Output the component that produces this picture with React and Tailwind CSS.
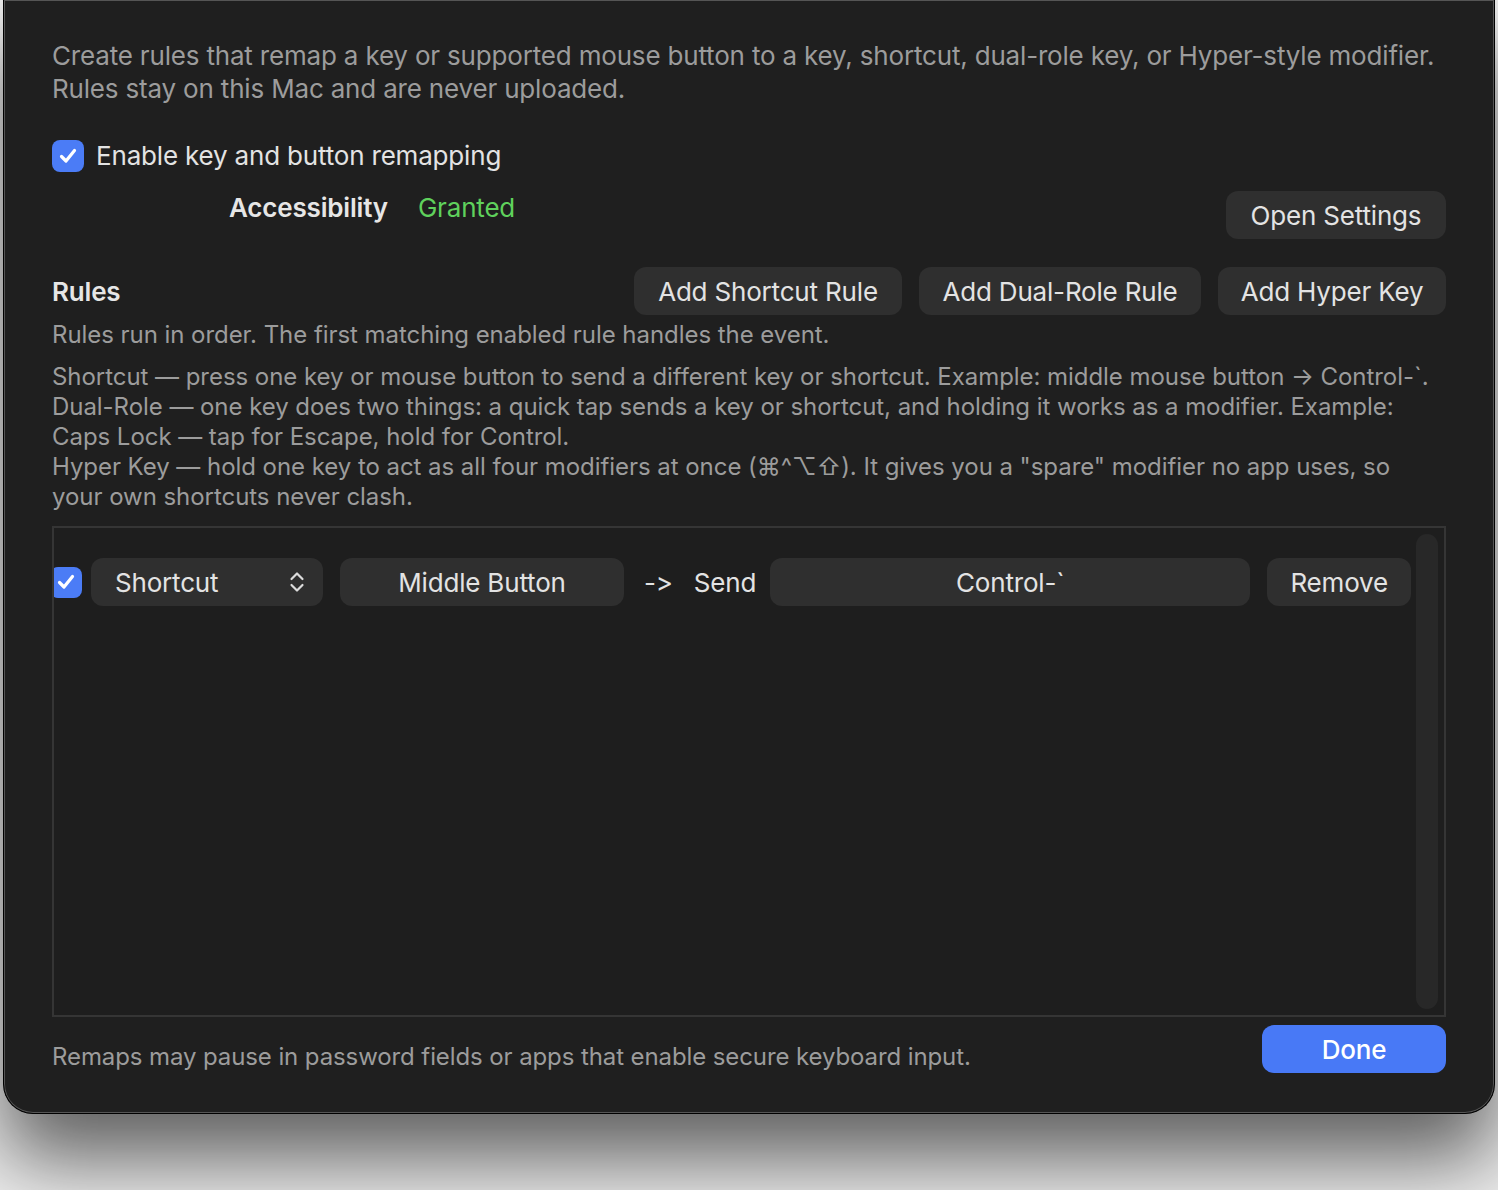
import React, { useState } from "react";

function Check({ checked, onChange, className = "" }) {
  return (
    <button
      onClick={onChange}
      className={`flex items-center justify-center rounded-[8px] ${checked ? "bg-[#4b7cf6]" : "bg-[#3a3a3a]"} ${className}`}
    >
      {checked && (
        <svg width="22" height="22" viewBox="0 0 22 22" fill="none">
          <path d="M4.5 11.5 L9 16 L17.5 5.5" stroke="white" strokeWidth="3.2" strokeLinecap="round" strokeLinejoin="round" />
        </svg>
      )}
    </button>
  );
}

function Btn({ children, className = "" }) {
  return (
    <button className={`h-[48px] rounded-[12px] bg-[#2f2f2f] text-[26px] tracking-[-0.18px] text-[#e3e3e3] ${className}`}>
      {children}
    </button>
  );
}

export default function App() {
  const [enabled, setEnabled] = useState(true);
  const [ruleOn, setRuleOn] = useState(true);

  return (
    <div
      className="h-[1190px] w-full overflow-hidden bg-[#ededed]"
      style={{ fontFamily: "Inter, 'Noto Sans', sans-serif" }}
    >
      <div className="ml-[3px] flex h-[1114px] w-[1492px] flex-col rounded-b-[30px] border-x border-b border-[#000] bg-[#1f1f1f] px-[48px] shadow-[0_45px_80px_rgba(0,0,0,0.6),inset_0_0_0_1px_#555]">
        <p className="mt-[39px] text-[26px] leading-[33px] tracking-[-0.18px] text-[#9c9c9c]">
          Create rules that remap a key or supported mouse button to a key, shortcut, dual-role key, or Hyper-style modifier.
          <br />
          Rules stay on this Mac and are never uploaded.
        </p>

        <div className="mt-[31px] flex items-center gap-[12px]">
          <Check checked={enabled} onChange={() => setEnabled(!enabled)} className="h-[32px] w-[32px]" />
          <span className="text-[26px] tracking-[-0.18px] text-[#e3e3e3]">Enable key and button remapping</span>
        </div>

        <div className="mt-[10px] flex items-start">
          <div className="ml-[177px] mt-[3px] flex items-center gap-[30px] text-[26px] tracking-[-0.18px]">
            <span className="font-semibold text-[#e6e6e6]">Accessibility</span>
            <span className="text-[#5fd15c]">Granted</span>
          </div>
          <Btn className="ml-auto mt-[6px] w-[220px]">Open Settings</Btn>
        </div>

        <div className="mt-[28px] flex items-center gap-[17px]">
          <span className="mr-auto text-[26px] font-semibold tracking-[-0.18px] text-[#e6e6e6]">Rules</span>
          <Btn className="w-[268px]">Add Shortcut Rule</Btn>
          <Btn className="w-[282px]">Add Dual-Role Rule</Btn>
          <Btn className="w-[228px]">Add Hyper Key</Btn>
        </div>

        <p className="mt-[5px] text-[24px] leading-[30px] tracking-[-0.05px] text-[#9c9c9c]">
          Rules run in order. The first matching enabled rule handles the event.
        </p>

        <p className="mt-[12px] text-[24px] leading-[30px] tracking-[-0.05px] text-[#9c9c9c]">
          Shortcut — press one key or mouse button to send a different key or shortcut. Example: middle mouse button → Control-`.
          <br />
          Dual-Role — one key does two things: a quick tap sends a key or shortcut, and holding it works as a modifier. Example:
          <br />
          Caps Lock — tap for Escape, hold for Control.
          <br />
          Hyper Key — hold one key to act as all four modifiers at once (⌘^⌥⇧). It gives you a "spare" modifier no app uses, so
          <br />
          your own shortcuts never clash.
        </p>

        <div className="mt-[14px] flex h-[491px] overflow-hidden border-2 border-[#353535] bg-[#1e1e1e]">
          <div className="flex flex-1 items-start pt-[30px]">
            <div className="flex items-center text-[26px] tracking-[-0.18px] text-[#e3e3e3]">
              <Check checked={ruleOn} onChange={() => setRuleOn(!ruleOn)} className="-ml-[4px] h-[31px] w-[32px]" />
              <div className="ml-[9px] flex h-[48px] w-[232px] items-center justify-between rounded-[12px] bg-[#2f2f2f] pl-[24px] pr-[18px]">
                <span>Shortcut</span>
                <svg width="16" height="24" viewBox="0 0 16 24" fill="none">
                  <path d="M2.5 9 L8 3.5 L13.5 9 M2.5 15 L8 20.5 L13.5 15" stroke="#dcdcdc" strokeWidth="2.2" strokeLinecap="round" strokeLinejoin="round" />
                </svg>
              </div>
              <div className="ml-[17px] flex h-[48px] w-[284px] items-center justify-center rounded-[12px] bg-[#2f2f2f]">
                Middle Button
              </div>
              <span className="ml-[20px]">-&gt;</span>
              <span className="ml-[21px]">Send</span>
              <div className="ml-[14px] flex h-[48px] w-[480px] items-center justify-center rounded-[12px] bg-[#2f2f2f]">
                Control-`
              </div>
              <div className="ml-[17px] flex h-[48px] w-[144px] items-center justify-center rounded-[12px] bg-[#2f2f2f]">
                Remove
              </div>
            </div>
          </div>
          <div className="my-[6px] mr-[6px] w-[22px] rounded-full bg-[#282828]" />
        </div>

        <div className="mt-[6px] flex items-center">
          <span className="mt-[16px] text-[24px] tracking-[-0.1px] text-[#9c9c9c]">
            Remaps may pause in password fields or apps that enable secure keyboard input.
          </span>
          <button className="ml-auto h-[48px] w-[184px] rounded-[12px] bg-[#4879f6] text-[26px] font-medium tracking-[-0.18px] text-white">
            Done
          </button>
        </div>
      </div>
    </div>
  );
}
